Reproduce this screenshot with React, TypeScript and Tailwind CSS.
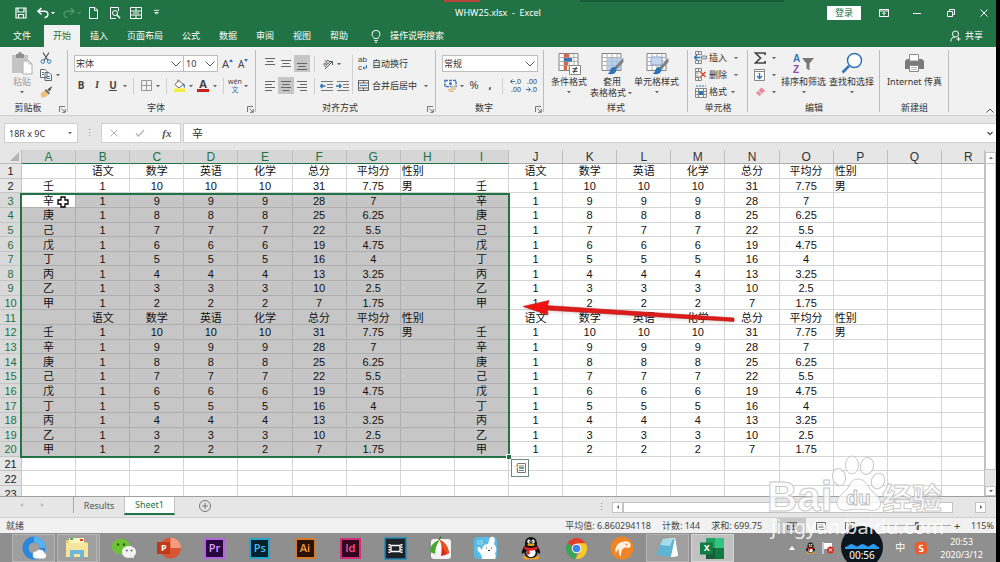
import type { ReactNode } from 'react'
import clsx from 'clsx'

const COLUMNS = 'ABCDEFGHIJKLMNOPQR'.split('')
const NAMES = ['壬', '辛', '庚', '己', '戊', '丁', '丙', '乙', '甲']
const SUBJECTS = ['语文', '数学', '英语', '化学', '总分', '平均分', '性别']

function buildRow(n: number): (string | number)[] {
  if (n > 20) return []
  if (n === 1 || n === 11) return ['', ...SUBJECTS, '', ...SUBJECTS]
  const i = n < 11 ? n - 2 : n - 12
  const v = 10 - i
  const total = 3 * v + 1
  const scores = [1, v, v, v, total, total / 4, i === 0 ? '男' : '']
  return [NAMES[i], ...scores, NAMES[i], ...scores]
}

const ROWS = Array.from({ length: 23 }, (_, i) => buildRow(i + 1))

/* ---------- small pieces ---------- */

function Caret({ className = 'text-[#666]' }: { className?: string }) {
  return (
    <svg viewBox="0 0 8 6" className={clsx('h-[6px] w-2 shrink-0', className)} fill="currentColor">
      <path d="M2 2h4L4 4.2z" />
    </svg>
  )
}

function Chevron({ className }: { className?: string }) {
  return (
    <svg viewBox="0 0 10 6" className={clsx('h-[6px] w-[10px]', className)} fill="none" stroke="#555" strokeWidth="1">
      <path d="M.5.5 5 5 9.5.5" />
    </svg>
  )
}

function Launcher() {
  return (
    <svg viewBox="0 0 7 7" className="h-[7px] w-[7px]" fill="none" stroke="#666" strokeWidth=".9">
      <path d="M.5 6V.5H6M2.5 2.5l3.5 3.5M6.3 3v3.3H3" />
    </svg>
  )
}

function Divider() {
  return <span className="mx-1 h-4 w-px shrink-0 bg-[#d0d0d0]" />
}

function Tool({ label, active, children }: { label: string; active?: boolean; children: ReactNode }) {
  return (
    <button
      aria-label={label}
      className={clsx('flex h-[17px] w-4 shrink-0 items-center justify-center', active && 'bg-[#c6c6c6]')}
    >
      {children}
    </button>
  )
}

function Group({ label, className, launcher, children }: { label: string; className: string; launcher?: boolean; children?: ReactNode }) {
  return (
    <section className={clsx('relative flex shrink-0 flex-col', className)}>
      <div className="flex-1">{children}</div>
      <div className="mb-px h-3 text-center leading-3">{label}</div>
      <span className="absolute top-[3px] right-0 h-[62px] w-px bg-[#bdbdbd]" />
      {launcher && (
        <button aria-label={`${label}设置`} className="absolute right-[2px] bottom-[2px]">
          <Launcher />
        </button>
      )}
    </section>
  )
}

function BigButton({ icon, lines, caret, inlineCaret, muted }: { icon: ReactNode; lines: string[]; caret?: boolean; inlineCaret?: boolean; muted?: boolean }) {
  return (
    <button className={clsx('flex flex-col items-center pt-1 leading-[11px] whitespace-nowrap', muted && 'text-[#a0a0a0]')}>
      <span className="mb-px flex h-6 items-center">{icon}</span>
      {lines.map((line, i) => (
        <span key={line} className="flex items-center">
          {line}
          {inlineCaret && i === lines.length - 1 && <Caret />}
        </span>
      ))}
      {caret && <span className="flex h-[10px] items-center"><Caret /></span>}
    </button>
  )
}

function Lines({ y, widths, align = 'center' }: { y: number; widths: number[]; align?: 'left' | 'center' | 'right' }) {
  return (
    <svg viewBox="0 0 12 16" className="h-4 w-3" stroke="#666" strokeWidth="1">
      {widths.map((w, i) => {
        const x = align === 'left' ? 1 : align === 'right' ? 11 - w : 6 - w / 2
        return <path key={i} d={`M${x} ${y + i * 3}h${w}`} />
      })}
    </svg>
  )
}

function Indent({ flip }: { flip?: boolean }) {
  return (
    <svg viewBox="0 0 14 12" className="h-3 w-[14px]" fill="none">
      <path d="M1 1.5h12M7 4.5h6M7 7.5h6M1 10.5h12" stroke="#777" />
      <path d={flip ? 'M0 6h5M3.2 4 5.2 6l-2 2' : 'M5.5 6h-5M2.5 4 .5 6l2 2'} stroke="#2e75b6" strokeWidth="1.3" />
    </svg>
  )
}

function CellsIcon({ kind }: { kind: 'insert' | 'delete' | 'format' }) {
  return (
    <svg viewBox="0 0 13 13" className="h-[13px] w-[13px]" fill="none">
      {kind !== 'format' && <path d="M1.5.5h6v3h-6zM1.5 9.5h6v3h-6zM4.500.5v3M4.500 9.500v3" stroke="#888" />}
      {kind === 'insert' && (
        <>
          <path d="M7.500 5h5v3h-5z" fill="#c5d6ec" stroke="#888" />
          <path d="M6.500 6.500h-6M3 4 .500 6.500 3 9" stroke="#2e75b6" strokeWidth="1.300" />
        </>
      )}
      {kind === 'delete' && (
        <>
          <path d="M1.500 3.500v6M4.500 5h-3M4.500 8h-3" stroke="#888" />
          <path d="m6.500 4 5 5M11.500 4l-5 5" stroke="#d9432f" strokeWidth="1.400" />
        </>
      )}
      {kind === 'format' && (
        <>
          <path d="M1.500 3.500h11v9h-11zM1.500 6.500h11M1.500 9.500h11M4.500 3.500v9M9.500 3.500v9" stroke="#888" />
          <path d="M5 6h4v4H5z" fill="#2e75b6" />
          <path d="M2 1h10" stroke="#2e75b6" strokeDasharray="2 1" />
        </>
      )}
    </svg>
  )
}

function TableIcon({ kind }: { kind: 'cond' | 'table' | 'cell' }) {
  return (
    <svg viewBox="0 0 24 24" className="h-6 w-6" fill="none">
      <path d="M2 2.500h19v17H2z" fill="#fff" stroke="#808080" />
      <path d="M2 6.500h19M2 10.500h19M2 14.500h19M7 2.500v17M12 2.500v17M17 2.500v17" stroke="#b0b0b0" />
      {kind === 'cond' && (
        <>
          <path d="M7 3h5v3.500H7zM7 11h4v3.500H7z" fill="#d9644a" />
          <path d="M7 7h8v3.500H7z" fill="#3b74b8" />
          <path d="M7 15h3v4H7z" fill="#d9644a" />
          <path d="M12.500 14.500h11v9h-11z" fill="#fff" stroke="#888" />
          <path d="M15.500 17.700h5M15.500 20.300h5M19.500 16l-3 6" stroke="#333" />
        </>
      )}
      {kind === 'table' && <path d="M7 7h14v12H7z" fill="#a9c5e6" fillOpacity=".8" />}
      {kind === 'cell' && <path d="M6 6h11v8H6z" fill="#c5d6ec" stroke="#8aa9cf" />}
      {kind !== 'cond' && (
        <>
          <path d="M23.500 7 14 16.500l2 2.500L23.500 11z" fill="#808080" />
          <path d="M14.500 16c-3-.5-4 2-4.500 4-.5 1.500-1.500 2-2.500 2.500 4 1.500 8.500.5 9-3.500z" fill="#2e75b6" />
        </>
      )}
    </svg>
  )
}

/* ---------- title, tabs ---------- */

function TitleBar() {
  return (
    <header className="relative grid h-[25px] grid-cols-3 items-center">
      <span className="absolute top-0 left-[444px] h-[2px] w-9 bg-[#b8443a]" />
      <span className="absolute top-0 left-[580px] h-[2px] w-[204px] bg-[#1a5c38]" />
      <div className="flex items-center pl-[15px]">
        <button aria-label="保存" className="w-[22px]">
          <svg viewBox="0 0 12 12" className="h-3 w-3" fill="none" stroke="#fff" strokeWidth="1.200">
            <path d="M1 1h10v10H1zM3 1v4h6V1M3.500 11V7.500h5V11" />
          </svg>
        </button>
        <button aria-label="撤消" className="flex w-[26px] items-center">
          <svg viewBox="0 0 12 12" className="h-3 w-3" fill="none" stroke="#fff" strokeWidth="1.500">
            <path d="M4.500 1 1 4.200l3.500 3.300M1 4.200h6.500c4.500 0 4.500 6.300 0 6.300" />
          </svg>
          <Caret className="text-white" />
        </button>
        <button aria-label="恢复" className="flex w-[25px] items-center">
          <svg viewBox="0 0 12 12" className="h-3 w-3" fill="none" stroke="#4f936b" strokeWidth="1.500">
            <path d="M7.500 1 11 4.200 7.500 7.500M11 4.200H4.500c-4.500 0-4.500 6.300 0 6.300" />
          </svg>
          <Caret className="text-[#4f936b]" />
        </button>
        <button aria-label="新建" className="w-[21px]">
          <svg viewBox="0 0 12 12" className="h-3 w-3" fill="none" stroke="#fff">
            <path d="M1.500.5H7L9.500 3v8.500h-8zM6.500.5v3h3" />
          </svg>
        </button>
        <button aria-label="打印预览" className="w-[21px]">
          <svg viewBox="0 0 12 12" className="h-3 w-3" fill="none" stroke="#fff">
            <path d="M9.500 4V.5h-8v11H7" />
            <circle cx="6" cy="6" r="2.500" />
            <path d="m8 8 3 3.300" strokeWidth="1.500" />
          </svg>
        </button>
        <button aria-label="表单" className="w-[21px]">
          <svg viewBox="0 0 12 12" className="h-3 w-3" fill="none" stroke="#fff">
            <path d="M.5.5h11v11H.5zM.5 4h11M.5 8h11M6 .5V4M6 8v3.500M3 6h6" />
          </svg>
        </button>
        <button aria-label="自定义快速访问工具栏" className="ml-[2px] w-3">
          <svg viewBox="0 0 8 8" className="h-[7px] w-[7px]" fill="none" stroke="#fff">
            <path d="M1 1.500h6M2 4h4L4 6z" />
          </svg>
        </button>
      </div>
      <h1 className="text-center leading-3 whitespace-pre text-white">WHW25.xlsx  -  Excel</h1>
      <div className="flex items-center justify-end pr-2 text-white">
        <button className="mr-[18px] h-[14px] w-[34px] bg-white leading-[14px] text-[#217346]">登录</button>
        <button aria-label="功能区显示选项" className="w-[34px]">
          <svg viewBox="0 0 10 8" className="h-2 w-[10px]" fill="none" stroke="currentColor">
            <path d="M.5.500h9v7h-9zM.5 2h9M5 6.500V3.500M3.500 4.800 5 3.300l1.500 1.500" />
          </svg>
        </button>
        <button aria-label="最小化" className="w-[34px]">
          <svg viewBox="0 0 8 8" className="h-2 w-2" stroke="currentColor"><path d="M0 4.500h8" /></svg>
        </button>
        <button aria-label="还原" className="w-[33px]">
          <svg viewBox="0 0 8 8" className="h-2 w-2" fill="none" stroke="currentColor">
            <path d="M.5 2.500h5v5h-5zM2.500 2.500v-2h5v5h-2" />
          </svg>
        </button>
        <button aria-label="关闭">
          <svg viewBox="0 0 8 8" className="h-2 w-2" stroke="currentColor"><path d="m.5.500 7 7M7.500.500l-7 7" /></svg>
        </button>
      </div>
    </header>
  )
}

const TABS = ['插入', '页面布局', '公式', '数据', '审阅', '视图', '帮助']

function TabBar() {
  return (
    <nav className="flex h-[22px] items-stretch text-white">
      <button className="w-11">文件</button>
      <button className="w-9 bg-[#f1f1f1] text-[#217346]">开始</button>
      <div className="ml-px flex gap-px">
        {TABS.map((tab) => (
          <button key={tab} className="px-[9px]">{tab}</button>
        ))}
      </div>
      <button className="ml-[14px] flex items-center gap-[9px]">
        <svg viewBox="0 0 10 13" className="h-[13px] w-[10px]" fill="none" stroke="#fff">
          <path d="M3 8.500C3 7 1 6.500 1 4.300a4 4 0 0 1 8 0C9 6.500 7 7 7 8.500zM3.300 10.500h3.400M4 12.300h2" />
        </svg>
        操作说明搜索
      </button>
      <button className="mr-[13px] ml-auto flex items-center gap-1">
        <svg viewBox="0 0 11 12" className="h-3 w-[11px]" fill="none" stroke="#fff">
          <circle cx="5.500" cy="4" r="3" />
          <path d="M.800 11.500C.800 8.500 2.500 7 5 7M6.500 9h4M8.500 7v4" />
        </svg>
        共享
      </button>
    </nav>
  )
}

/* ---------- ribbon ---------- */

function Ribbon() {
  return (
    <div className="relative flex h-[69px] border-b border-[#cfcfcf] bg-[#f1f1f1]">
      <Group label="剪贴板" className="w-[68px] pr-3" launcher>
        <div className="flex gap-[5px] pl-[11px]">
          <BigButton
            muted
            caret
            lines={['粘贴']}
            icon={
              <svg viewBox="0 0 22 24" className="h-6 w-[22px]">
                <path d="M1 4h16v18H1z" fill="#c4c4c4" />
                <path d="M5 3h2a2 2 0 0 1 4 0h2v4H5z" fill="#8f8f8f" />
                <path d="M12 10h6l3 3v10h-9z" fill="#fff" stroke="#b0b0b0" />
                <path d="M18 10v3h3" fill="none" stroke="#b0b0b0" />
              </svg>
            }
          />
          <div className="flex flex-col pt-[2px]">
            <Tool label="剪切">
              <svg viewBox="0 0 12 12" className="h-3 w-3" fill="none">
                <path d="m3 .5 5 8M9 .5l-5 8" stroke="#555" strokeWidth="1.200" />
                <circle cx="2.800" cy="9.500" r="1.800" stroke="#2e75b6" />
                <circle cx="9.200" cy="9.500" r="1.800" stroke="#2e75b6" />
              </svg>
            </Tool>
            <div className="flex items-center">
              <Tool label="复制">
                <svg viewBox="0 0 12 12" className="h-3 w-3" fill="#fff" stroke="#666">
                  <path d="M.5.5H5L7 2.500v6H.5zM5 3.500h4l2.500 2.500v5.500H5z" />
                  <path d="M2 3.500h2M2 5.500h2M6.500 7.500h3.500M6.500 9.500h3.500" stroke="#2e75b6" />
                </svg>
              </Tool>
              <Caret />
            </div>
            <Tool label="格式刷">
              <svg viewBox="0 0 12 12" className="h-3 w-3">
                <path d="M11.500 1 8 3.500 9.500 5z" fill="#555" stroke="#555" />
                <path d="m6 3 4 4-1.500 1.500-4-4z" fill="#666" />
                <path d="m4.500 4.500 4 4C7 11 4 11.500 1 11.500 1.800 10 .5 8 .5 7.500z" fill="#eec07b" />
              </svg>
            </Tool>
          </div>
        </div>
      </Group>

      <Group label="字体" className="w-[188px] pr-3" launcher>
        <div className="flex flex-col gap-[5px] pt-2 pl-[5px]">
          <div className="flex items-center">
            <label className="relative ml-px shrink-0">
              <select aria-label="字体" className="h-[17px] w-[110px] appearance-none border border-[#bebebe] bg-white pl-px leading-[15px]">
                <option>宋体</option>
              </select>
              <Chevron className="pointer-events-none absolute top-[6px] right-[3px]" />
            </label>
            <label className="relative -ml-px shrink-0">
              <select aria-label="字号" className="h-[17px] w-[35px] appearance-none border border-[#bebebe] bg-white pl-[2px] leading-[15px]">
                <option>10</option>
              </select>
              <Chevron className="pointer-events-none absolute top-[6px] right-[3px]" />
            </label>
            <button aria-label="增大字号" className="ml-1 flex w-4 shrink-0 text-[11px] leading-4 text-[#444]">
              A
              <svg viewBox="0 0 4 3" className="mt-[3px] h-[3px] w-1" fill="#2e75b6"><path d="M0 3 2 0l2 3z" /></svg>
            </button>
            <button aria-label="减小字号" className="flex w-4 shrink-0 text-[10px] leading-4 text-[#444]">
              A
              <svg viewBox="0 0 4 3" className="mt-[3px] h-[3px] w-1" fill="#2e75b6"><path d="m0 0 2 3 2-3z" /></svg>
            </button>
          </div>
          <div className="flex items-center text-[10px] text-[#444]">
            <Tool label="加粗"><b>B</b></Tool>
            <Tool label="倾斜"><i className="font-serif font-bold">I</i></Tool>
            <Tool label="下划线"><u className="font-bold">U</u></Tool>
            <Caret />
            <Divider />
            <Tool label="边框">
              <svg viewBox="0 0 11 11" className="h-[11px] w-[11px]" fill="none" stroke="#999">
                <path d="M.5.5h10v10H.5zM5.500.5v10M.5 5.500h10" />
              </svg>
            </Tool>
            <Caret />
            <Divider />
            <Tool label="填充颜色">
              <svg viewBox="0 0 13 13" className="h-[13px] w-[13px]">
                <path d="m2 5.500 4-4 4 4-4 3.500z" fill="#fff" stroke="#666" />
                <path d="M5 3V.5" stroke="#666" />
                <path d="M10 4c2 1 2.500 3 1.500 5C10.500 7.500 10 6 10 4z" fill="#2e75b6" />
                <path d="M1 9.500h11V13H1z" fill="#f5ee3c" />
              </svg>
            </Tool>
            <Caret />
            <Tool label="字体颜色">
              <span className="w-3 border-b-[3px] border-[#c8201c] text-[11px] leading-[10px] font-bold">A</span>
            </Tool>
            <Caret />
            <Divider />
            <button className="flex w-4 flex-col items-center text-[7px] leading-[8px]">
              <span>wén</span>
              <span className="text-[#2e75b6]">文</span>
            </button>
            <Caret />
          </div>
        </div>
      </Group>

      <Group label="对齐方式" className="w-[180px] pr-3" launcher>
        <div className="flex pt-2 pl-[6px]">
          <div className="flex w-[91px] shrink-0 flex-col gap-[5px] border-r border-[#d0d0d0]">
            <div className="flex items-center">
              <Tool label="顶端对齐"><Lines y={2.5} widths={[10, 7, 10]} /></Tool>
              <Tool label="垂直居中"><Lines y={4.5} widths={[10, 7, 10]} /></Tool>
              <Tool label="底端对齐" active><Lines y={7.5} widths={[10, 7, 10]} /></Tool>
              <Divider />
              <Tool label="方向">
                <svg viewBox="0 0 16 17" className="h-[17px] w-4 overflow-visible" fill="none" stroke="#555">
                  <path d="m6 14 7-7M13.500 10V6.500H10" />
                  <text x="3" y="11" transform="rotate(-45 6 8)" fill="#444" stroke="none" fontSize="7" fontFamily="Liberation Sans">ab</text>
                </svg>
              </Tool>
              <Caret />
            </div>
            <div className="flex items-center">
              <Tool label="左对齐"><Lines y={3.5} widths={[10, 7, 10, 7]} align="left" /></Tool>
              <Tool label="居中" active><Lines y={3.5} widths={[10, 7, 10, 7]} /></Tool>
              <Tool label="右对齐"><Lines y={3.5} widths={[10, 7, 10, 7]} align="right" /></Tool>
              <Divider />
              <Tool label="减少缩进量"><Indent /></Tool>
              <Tool label="增加缩进量"><Indent flip /></Tool>
            </div>
          </div>
          <div className="flex flex-col gap-[5px] pl-[5px] whitespace-nowrap">
            <button className="flex h-[17px] items-center gap-[3px]">
              <span className="flex w-[11px] flex-col items-start font-['Liberation_Sans',sans-serif] text-[8px] leading-[8px] text-[#444]">
                <span>ab</span>
                <span className="flex items-center">
                  c
                  <svg viewBox="0 0 5 5" className="h-[5px] w-[5px]" fill="none" stroke="#2e75b6"><path d="M4.500 0v3H1M2.500 1.500 1 3l1.500 1.500" /></svg>
                </span>
              </span>
              自动换行
            </button>
            <button className="flex h-[17px] items-center gap-[3px]">
              <svg viewBox="0 0 11 11" className="h-[11px] w-[11px]" fill="none" stroke="#666">
                <path d="M.5.5h10v10H.5zM.5 3h10M.5 8h10M5.500.5V3M5.500 8v2.500" />
                <path d="M2 5.500h7" stroke="#2e75b6" />
              </svg>
              合并后居中
              <span className="ml-[2px] flex"><Caret /></span>
            </button>
          </div>
        </div>
      </Group>

      <Group label="数字" className="w-[108px] pr-3" launcher>
        <div className="flex flex-col gap-[5px] pt-2 pl-[6px]">
          <label className="relative w-24">
            <select aria-label="数字格式" className="h-[17px] w-24 appearance-none border border-[#bebebe] bg-white pl-px leading-[15px]">
              <option>常规</option>
            </select>
            <Chevron className="pointer-events-none absolute top-[6px] right-[3px]" />
          </label>
          <div className="flex items-center text-[11px] text-[#444]">
            <Tool label="会计数字格式">
              <svg viewBox="0 0 13 13" className="h-[13px] w-[13px]">
                <path d="M1 1.500h11v6H1z" fill="#fff" stroke="#3b74b8" strokeWidth="1.500" strokeDasharray="3 1" />
                <circle cx="6.500" cy="4.500" r="1.500" fill="#3b74b8" />
                <path d="M7 7h5v1.500H7zM7 9.200h5v1.500H7zM4 10h4v1.500H4zM5 12h5v1H5z" fill="#e9b97c" />
              </svg>
            </Tool>
            <Caret />
            <Tool label="百分比样式">%</Tool>
            <Tool label="千位分隔样式"><b>,</b></Tool>
            <Divider />
            <button aria-label="增加小数位数" className="flex w-4 shrink-0 flex-col items-end pr-[2px] text-[7px] leading-[8px]">
              <span className="flex items-center">
                <svg viewBox="0 0 5 5" className="h-[5px] w-[5px]" fill="none" stroke="#2e75b6"><path d="M5 2.500H.5M2.500.5l-2 2 2 2" /></svg>
                .0
              </span>
              <span>.00</span>
            </button>
            <button aria-label="减少小数位数" className="flex w-4 shrink-0 flex-col items-end pr-[2px] text-[7px] leading-[8px]">
              <span>.00</span>
              <span className="flex items-center">
                <svg viewBox="0 0 5 5" className="h-[5px] w-[5px]" fill="none" stroke="#2e75b6"><path d="M0 2.500h4.500M2.500.5l2 2-2 2" /></svg>
                .0
              </span>
            </button>
          </div>
        </div>
      </Group>

      <Group label="样式" className="w-36">
        <div className="flex items-start pl-[7px]">
          <BigButton icon={<TableIcon kind="cond" />} lines={['条件格式']} caret />
          <span className="ml-[3px]"><BigButton icon={<TableIcon kind="table" />} lines={['套用', '表格格式']} inlineCaret /></span>
          <BigButton icon={<TableIcon kind="cell" />} lines={['单元格样式']} caret />
        </div>
      </Group>

      <Group label="单元格" className="w-[60px]">
        <div className="flex flex-col pt-[2px] pl-[6px]">
          <button className="flex h-[17px] items-center gap-[2px]"><CellsIcon kind="insert" />插入<span className="ml-[3px] flex"><Caret /></span></button>
          <button className="flex h-[17px] items-center gap-[2px]"><CellsIcon kind="delete" />删除<span className="ml-[3px] flex"><Caret /></span></button>
          <button className="flex h-[17px] items-center gap-[2px]"><CellsIcon kind="format" />格式<Caret /></button>
        </div>
      </Group>

      <Group label="编辑" className="w-[132px]">
        <div className="flex items-start pl-1">
          <div className="flex w-[29px] flex-col pt-[2px]">
            <div className="flex items-center gap-[2px]">
              <Tool label="自动求和">
                <svg viewBox="0 0 12 12" className="h-3 w-3" fill="none" stroke="#444" strokeWidth="1.700">
                  <path d="M11 3V1H1.500L6.500 6l-5 5H11V9" />
                </svg>
              </Tool>
              <Caret />
            </div>
            <div className="flex items-center gap-[2px]">
              <Tool label="填充">
                <svg viewBox="0 0 12 12" className="h-3 w-3" fill="#fff" stroke="#888">
                  <path d="M.5.5h10v11H.5zM.5 2.500h10" />
                  <path d="M5.500 4v5.500M3 7l2.500 2.500L8 7" fill="none" stroke="#2e75b6" strokeWidth="1.400" />
                </svg>
              </Tool>
              <Caret />
            </div>
            <div className="flex items-center gap-[2px]">
              <Tool label="清除">
                <svg viewBox="0 0 12 12" className="h-[11px] w-[11px]">
                  <path d="M7 1.500 11 5 5 11 1 7.500z" fill="#e58a9d" />
                  <path d="m3.500 5 4 3.700" stroke="#fff" />
                </svg>
              </Tool>
              <Caret />
            </div>
          </div>
          <BigButton
            caret
            lines={['排序和筛选']}
            icon={
              <svg viewBox="0 0 24 24" className="h-6 w-6" fontFamily="Liberation Sans">
                <text x="1" y="11" fill="#2e75b6" fontSize="10" fontWeight="700">A</text>
                <text x="1" y="22" fill="#8f4bab" fontSize="10" fontWeight="700">Z</text>
                <path d="M10 7h12l-4.500 5.500v7l-3-2v-5z" fill="#777" />
              </svg>
            }
          />
          <span className="ml-[3px]">
            <BigButton
              caret
              lines={['查找和选择']}
              icon={
                <svg viewBox="0 0 24 24" className="h-6 w-6" fill="none" stroke="#2e75b6">
                  <circle cx="14.500" cy="9.500" r="7" fill="#fff" strokeWidth="1.500" />
                  <path d="m9 15-6.500 6.500" strokeWidth="2.500" />
                </svg>
              }
            />
          </span>
        </div>
      </Group>

      <Group label="新建组" className="w-[69px]">
        <div className="flex justify-center">
          <BigButton
            lines={['Internet 传真']}
            icon={
              <svg viewBox="0 0 24 24" className="h-6 w-6">
                <path d="M5 8h15l2 2v8H3v-8z" fill="#7a7a7a" />
                <path d="M7.500 3.500h9V10h-9zM7.500 14.500h9v6h-9z" fill="#fff" stroke="#888" />
                <path d="M9 16.500h6M9 18.500h6" stroke="#bbb" />
              </svg>
            }
          />
        </div>
      </Group>

      <button aria-label="折叠功能区" className="absolute right-[2px] bottom-[2px]">
        <svg viewBox="0 0 8 5" className="h-[5px] w-2" fill="none" stroke="#555"><path d="M.5 4.500 4 1l3.500 3.500" /></svg>
      </button>
    </div>
  )
}

function FormulaBar() {
  return (
    <div className="flex h-[34px] items-center bg-[#e6e6e6] pl-1">
      <label className="relative">
        <input aria-label="名称框" defaultValue="18R x 9C" className="h-5 w-[74px] border border-[#cfcfcf] bg-white pl-1" />
        <span className="absolute top-[7px] right-1 flex"><Caret /></span>
      </label>
      <span className="w-[23px] text-center text-[#999]">⋮</span>
      <div className="flex h-5 w-20 items-center justify-around border border-[#cfcfcf] bg-white text-[#b5b5b5]">
        <button aria-label="取消">
          <svg viewBox="0 0 8 8" className="h-2 w-2" stroke="currentColor"><path d="m.5.500 7 7M7.500.500l-7 7" /></svg>
        </button>
        <button aria-label="输入">
          <svg viewBox="0 0 10 8" className="h-2 w-[10px]" fill="none" stroke="currentColor" strokeWidth="1.300"><path d="m1 4.500 2.500 2.500L9 1" /></svg>
        </button>
        <button className="font-['Liberation_Serif',serif] text-[11px] leading-3 font-bold text-[#555] italic">fx</button>
      </div>
      <label className="relative ml-[2px] flex-1">
        <input aria-label="编辑栏" defaultValue="辛" className="h-5 w-full border border-r-0 border-[#cfcfcf] bg-white pl-2 text-[11px]" />
        <svg viewBox="0 0 6 5" className="absolute top-2 right-[3px] h-[5px] w-[6px]" fill="none" stroke="#555" strokeWidth="1.300"><path d="M.5 1 3 3.500 5.500 1" /></svg>
      </label>
    </div>
  )
}

/* ---------- sheet ---------- */

function Sheet() {
  return (
    <div className="flex min-h-0 flex-1 bg-[#e6e6e6]">
      <div className="relative min-w-0 flex-1 overflow-hidden border-r border-[#c0c0c0]">
        <table className="h-[351px] w-[996px] table-fixed border-separate border-spacing-0 font-['Liberation_Sans','Noto_Sans_CJK_SC',sans-serif] text-[11px] leading-3 text-[#111]">
          <colgroup>
            <col className="w-[22px]" />
            {COLUMNS.map((c) => <col key={c} />)}
          </colgroup>
          <thead>
            <tr className="h-[14px] text-[12px]">
              <th className="border-r border-b border-[#bdbdbd] p-0">
                <svg viewBox="0 0 9 9" className="ml-[10px] h-[9px] w-[9px]" fill="#b5b5b5"><path d="M9 0v9H0z" /></svg>
              </th>
              {COLUMNS.map((c, i) => (
                <th
                  key={c}
                  className={clsx(
                    'border-r border-b border-r-[#bdbdbd] p-0 pt-px font-normal',
                    i < 9 ? 'border-b-[#217346] bg-[#d6d6d6] text-[#217346]' : 'border-b-[#a9a9a9] text-[#333]',
                  )}
                >
                  {c}
                </th>
              ))}
            </tr>
          </thead>
          <tbody>
            {ROWS.map((row, r) => {
              const picked = r >= 2 && r < 20
              return (
                <tr key={r}>
                  <th
                    className={clsx(
                      'border-r border-b border-[#c4c4c4] p-0 pt-px font-normal',
                      picked ? 'bg-[#d9d9d9] text-[#217346]' : 'text-[#222]',
                    )}
                  >
                    {r + 1}
                  </th>
                  {COLUMNS.map((c, i) => (
                    <td
                      key={c}
                      className={clsx(
                        'overflow-hidden border-r border-b p-0 pt-px',
                        i === 7 || i === 15 ? 'pl-px text-left' : 'text-center',
                        picked && i < 9 ? 'border-[#aeaeae]' : 'border-[#d4d4d4]',
                        picked && i < 9 && !(r === 2 && i === 0) ? 'bg-[#c6c6c6]' : 'bg-white',
                      )}
                    >
                      {row[i]}
                    </td>
                  ))}
                </tr>
              )
            })}
          </tbody>
        </table>

        {/* selection frame with fill handle */}
        <div className="pointer-events-none absolute top-[43px] left-5 h-[265px] w-[490px] border-2 border-[#217346]">
          <span className="absolute -right-[3px] -bottom-[3px] h-[5px] w-[5px] border-t border-l border-white bg-[#217346]" />
        </div>
        <svg viewBox="0 0 12 12" className="absolute top-[46px] left-[57px] h-3 w-3" fill="#fff" stroke="#000" strokeWidth="1.300">
          <path d="M4 1h4v3h3v4H8v3H4V8H1V4h3z" />
        </svg>
        <button aria-label="快速分析" className="absolute top-[309px] left-[511px] flex h-[18px] w-[18px] items-center justify-center border border-[#6b8a78] bg-white">
          <svg viewBox="0 0 12 12" className="h-3 w-3" fill="none" stroke="#777">
            <path d="M3.500 1.500h8v9h-8zM5 4h5M5 8.500h5" />
            <path d="M5 6h5" stroke="#2e8a7a" strokeWidth="1.500" />
            <path d="M4 0 1 5h2l-2 5 4-6H3z" fill="#eec07b" stroke="none" />
          </svg>
        </button>
        <svg viewBox="0 0 216 28" className="absolute top-[149px] left-[522px] h-7 w-[216px] drop-shadow-sm">
          <path d="M24 6.500 212 19v3.500L24 11z" fill="#dd1c1a" stroke="#b81412" strokeWidth=".6" />
          <path d="M1 7.500 27 1.500l-2 6.500 1 8z" fill="#f01210" stroke="#c21513" strokeWidth=".6" />
        </svg>
      </div>
      <div className="flex w-[11px] flex-col justify-between bg-[#e6e6e6] pt-[2px]">
        <button aria-label="向上" className="flex h-3 items-center justify-center border border-[#c4c4c4] bg-white">
          <Caret className="rotate-180 text-[#666]" />
        </button>
        <div className="w-full flex-1 border-x border-b border-[#c4c4c4] bg-white" />
        <div className="h-4" />
        <button aria-label="向下" className="flex h-[10px] items-center justify-center border border-[#c4c4c4] bg-white">
          <Caret />
        </button>
      </div>
    </div>
  )
}

function SheetTabs() {
  return (
    <div className="flex h-[21px] shrink-0 border-t border-[#a0a0a0] bg-[#e6e6e6] text-[#555]">
      <div className="flex h-4 w-[74px] items-center justify-center gap-3 border-r border-[#a8a8a8] pr-[10px] text-[#b5b5b5]">
        <button aria-label="上一个"><svg viewBox="0 0 8 8" className="h-2 w-2" fill="currentColor"><path d="M5 2v4L2.500 4z" /></svg></button>
        <button aria-label="下一个"><svg viewBox="0 0 8 8" className="h-2 w-2" fill="currentColor"><path d="M3 2v4l2.500-2z" /></svg></button>
      </div>
      <button className="h-[18px] w-[50px]">Results</button>
      <button className="h-[18px] w-[51px] border-x border-b-2 border-x-[#c4c4c4] border-b-[#217346] bg-white text-[#217346]">Sheet1</button>
      <button aria-label="新工作表" className="ml-6 flex h-[18px] items-center">
        <svg viewBox="0 0 12 12" className="h-3 w-3" fill="none" stroke="#777">
          <circle cx="6" cy="6" r="5.500" />
          <path d="M6 3v6M3 6h6" />
        </svg>
      </button>
      <div className="ml-auto flex h-5 w-[399px] items-center pr-[10px]">
        <span className="text-[#888]">⋮</span>
        <button aria-label="向左" className="ml-[6px] flex h-[11px] w-[11px] items-center justify-center border border-[#c4c4c4] bg-white">
          <Caret className="rotate-90 text-[#666]" />
        </button>
        <div className="mr-[22px] h-[11px] flex-1 border border-[#c4c4c4] bg-white" />
        <button aria-label="向右" className="flex h-[11px] w-[11px] items-center justify-center border border-[#c4c4c4] bg-white">
          <Caret className="-rotate-90 text-[#666]" />
        </button>
      </div>
    </div>
  )
}

function StatusBar() {
  return (
    <div className="flex h-4 shrink-0 items-center border-t border-[#d0d0d0] bg-[#f1f1f1] pr-[2px] pl-[6px] text-[#444]">
      <span>就绪</span>
      <div className="ml-auto flex gap-[11px]">
        <span>平均值: 6.860294118</span>
        <span>计数: 144</span>
        <span>求和: 699.75</span>
      </div>
      <div className="ml-[15px] flex items-center">
        <button aria-label="普通" className="flex h-[15px] w-[29px] items-center justify-center bg-[#c6c6c6]">
          <svg viewBox="0 0 10 8" className="h-2 w-[10px]" fill="none" stroke="#666"><path d="M.5.500h9v7h-9zM.5 4h9M3.500.5v7M6.500.5v7" /></svg>
        </button>
        <button aria-label="页面布局" className="flex w-[29px] justify-center">
          <svg viewBox="0 0 10 8" className="h-2 w-[10px]" fill="none" stroke="#666"><path d="M.5.500h9v7h-9zM2.500 2.500h5M2.500 5h5" /></svg>
        </button>
        <button aria-label="分页预览" className="flex w-[30px] justify-center">
          <svg viewBox="0 0 10 8" className="h-2 w-[10px]" fill="none" stroke="#666"><path d="M.5 7.500V.5h3.500v7M6 7.500V.5h3.500v7" /></svg>
        </button>
      </div>
      <div className="relative ml-4 flex w-[70px] items-center">
        <span className="h-px w-full bg-[#a8a8a8]" />
        <input
          type="range"
          aria-label="缩放"
          defaultValue={52}
          className="absolute inset-0 m-auto h-2 w-full appearance-none bg-transparent [&::-webkit-slider-thumb]:h-2 [&::-webkit-slider-thumb]:w-1 [&::-webkit-slider-thumb]:appearance-none [&::-webkit-slider-thumb]:bg-[#666]"
        />
      </div>
      <button className="w-3 text-[11px] leading-3">+</button>
      <span className="ml-2">115%</span>
    </div>
  )
}

/* ---------- taskbar ---------- */

function Adobe({ text, className }: { text: string; className: string }) {
  return (
    <span className={clsx("flex h-[21px] w-[21px] items-center justify-center border-2 font-['Open_Sans',sans-serif] text-[11px] font-semibold", className)}>
      {text}
    </span>
  )
}

function Penguin({ className }: { className: string }) {
  return (
    <svg viewBox="0 0 24 26" className={className}>
      <ellipse cx="8" cy="23.500" rx="5" ry="2" fill="#f0a020" />
      <ellipse cx="16" cy="23.500" rx="5" ry="2" fill="#f0a020" />
      <path d="M12 1c5 0 7 4 6.500 9 2 3 4 6 3.500 9-1 1-2-1-3-1 0 4-3 6-7 6s-7-2-7-6c-1 0-2 2-3 1-.500-3 1.500-6 3.500-9C5 5 7 1 12 1z" fill="#111" />
      <ellipse cx="12" cy="18" rx="5" ry="5" fill="#fff" />
      <ellipse cx="9.700" cy="6" rx="1.700" ry="2.300" fill="#fff" />
      <ellipse cx="14.300" cy="6" rx="1.700" ry="2.300" fill="#fff" />
      <circle cx="10.200" cy="6.300" r=".8" />
      <circle cx="13.800" cy="6.300" r=".8" />
      <ellipse cx="12" cy="9.500" rx="4" ry="1.300" fill="#f0a020" />
      <path d="M5 11c4 2.500 10 2.500 14 0l.5 3c-3 1.500-6 2-9 1.800V20H7.500v-4.800L4.500 14z" fill="#e02020" />
    </svg>
  )
}

const APPS: { name: string; frame?: string; icon: ReactNode }[] = [
  {
    name: 'QQ浏览器',
    frame: 'border border-[#b5b5b5] bg-white/15',
    icon: (
      <svg viewBox="0 0 24 24" className="h-6 w-6">
        <circle cx="12" cy="12" r="8.500" fill="none" stroke="#2b87dc" strokeWidth="6" />
        <path d="M12 3.500a8.500 8.500 0 0 1 8.500 8.500" fill="none" stroke="#55b4f0" strokeWidth="6" />
        <path d="M14 22.500a3.500 3.500 0 0 1 .500-7 4.500 4.500 0 0 1 8 1.500 3 3 0 0 1-.500 5.500z" fill="#fff" />
      </svg>
    ),
  },
  {
    name: '文件资源管理器',
    frame: 'border border-r-4 border-double border-[#b5b5b5] bg-white/15',
    icon: (
      <svg viewBox="0 0 24 24" className="h-6 w-6">
        <path d="M1 4h8l2 2h11v15H1z" fill="#e8cf74" />
        <path d="M4 2h15v6H4z" fill="#fff3c0" />
        <path d="M5 2h3v2H5z" fill="#4caf50" />
        <path d="M15 3h3v2h-3z" fill="#d9432f" />
        <path d="M1 7h22v14H1z" fill="#f6e59a" />
        <path d="M5 22v-8h14v8h-4v-4H9v4z" fill="#6db9dd" />
      </svg>
    ),
  },
  {
    name: '微信',
    icon: (
      <svg viewBox="0 0 26 22" className="h-[22px] w-[26px]">
        <path d="M10 2c5 0 9 3 9 7.500S15 17 10 17c-1 0-2 0-3-.5L4 18l.500-2.500C2 14 1 12 1 9.500 1 5 5 2 10 2z" fill="#6cc433" />
        <circle cx="7" cy="7.500" r="1.200" fill="#245c12" />
        <circle cx="13" cy="7.500" r="1.200" fill="#245c12" />
        <path d="M18 9c4 0 7 2.500 7 6 0 2-1 3.500-2.500 4.500L23 21.500 20.500 20.500c-5 1.500-9.500-1-9.500-5.500 0-3.500 3-6 7-6z" fill="#f2f2f2" />
        <circle cx="15.800" cy="13.500" r="1" fill="#666" />
        <circle cx="20.500" cy="13.500" r="1" fill="#666" />
      </svg>
    ),
  },
  {
    name: 'PowerPoint',
    icon: (
      <span className="relative flex h-[22px] w-6 items-center">
        <svg viewBox="0 0 24 22" className="absolute inset-0 h-full w-full">
          <circle cx="13.500" cy="11" r="10.500" fill="#d65532" />
          <path d="M13.500.5A10.500 10.500 0 0 1 24 11H13.500z" fill="#f59b80" />
          <path d="M0 5h13v12H0z" fill="#bf3a1b" />
        </svg>
        <b className="relative w-[13px] text-center text-[9px] text-white">P</b>
      </span>
    ),
  },
  { name: 'Premiere', icon: <Adobe text="Pr" className="border-[#b266dd] bg-[#2a0640] text-[#d9a0ff]" /> },
  { name: 'Photoshop', icon: <Adobe text="Ps" className="border-[#27a5cf] bg-[#06202c] text-[#3cc5f0]" /> },
  { name: 'Illustrator', icon: <Adobe text="Ai" className="border-[#d9792b] bg-[#2b1206] text-[#f59a3c]" /> },
  { name: 'InDesign', icon: <Adobe text="Id" className="border-[#cf2f78] bg-[#33041c] text-[#f0559a]" /> },
  {
    name: '视频编辑',
    icon: (
      <svg viewBox="0 0 23 23" className="h-[23px] w-[23px]" fill="none">
        <path d="M1 1h21v21H1z" fill="#1d2228" stroke="#2487b5" strokeWidth="1.500" />
        <path d="M7 8.500h9v6H7z" stroke="#fff" strokeWidth="1.300" />
        <path d="M5.500 7v9M17.500 7v9" stroke="#fff" strokeWidth="2" strokeDasharray="1.500 1" />
      </svg>
    ),
  },
  {
    name: '格式转换',
    icon: (
      <svg viewBox="0 0 22 24" className="h-6 w-[22px]">
        <rect x="1" y="3" width="20" height="20" rx="3" fill="#f3f3f3" />
        <path d="M10 4C4 5 0 10 0 16l5 2C5 12 7 8 10 4z" fill="#4aa832" />
        <path d="M10 4C7 8 6 13 8 17l3-3c0-4 0-7-1-10z" fill="#fff" />
        <path d="M10 4c2 4 2 10 1 16 3-1 5-1 8-3C18 11 15 6 10 4z" fill="#d9281c" />
        <path d="M10 4c1 5 3 10 7 14l2-1C18 11 15 6 10 4z" fill="#e8541e" />
        <path d="M9 4 11 .5" stroke="#3a7a28" strokeWidth="1.500" />
      </svg>
    ),
  },
  {
    name: '招手助手',
    icon: (
      <svg viewBox="0 0 24 24" className="h-6 w-6">
        <rect x="0" y="1" width="23" height="22" rx="4" fill="#58bce6" />
        <path d="M17 1c3-1 5 1 3 7 3 3 3 7 1 9 1 2 1 5 0 6H8c0-3-1-5-3-7-2-2-2-5 0-5s1 2 3 3c0-3 2-6 6-6 1-3 1-6 3-7z" fill="#fff" />
        <path d="M4 5h4v3H4z" fill="none" stroke="#a9def3" />
        <path d="M12 12h1M17 12h1M14 14.500h2" stroke="#333" />
      </svg>
    ),
  },
  { name: 'QQ', icon: <Penguin className="h-6 w-[22px]" /> },
  {
    name: 'Chrome',
    icon: (
      <svg viewBox="0 0 24 24" className="h-[23px] w-[23px]">
        <path d="M12 12 2.500 6.500a11 11 0 0 1 19 0z" fill="#e2402f" />
        <path d="M2.500 6.500 12 12l-1 11A11 11 0 0 1 2.500 6.500z" fill="#3aa554" />
        <path d="M21.500 6.500A11 11 0 0 1 11 23l5-9-4-7.500z" fill="#fbc926" />
        <circle cx="12" cy="12" r="5" fill="#fff" />
        <circle cx="12" cy="12" r="4" fill="#4285e8" />
      </svg>
    ),
  },
  {
    name: 'UC浏览器',
    icon: (
      <svg viewBox="0 0 24 24" className="h-6 w-6">
        <circle cx="12" cy="12" r="11.500" fill="#ee8426" />
        <path d="M20 7c1 2 1 4-1 5-2 0-3-1-5 0-3 2-3 6-3 9-2-2-3-5-2-8-2 1-3 3-3 5-2-5 1-11 6-12 3-1 6-1 8 1z" fill="#fdf0e0" />
        <circle cx="16.500" cy="8.500" r=".9" fill="#ee8426" />
      </svg>
    ),
  },
  {
    name: '记事本',
    frame: 'border border-[#b5b5b5] bg-white/15',
    icon: (
      <svg viewBox="0 0 24 24" className="h-6 w-6">
        <path d="M8 3 20 2l3 18-7 1z" fill="#f1f1f1" />
        <path d="M8 3h12l-4 18-15-2z" fill="#5fb4cf" />
        <path d="m8 3 10 0-3 7L5 9z" fill="#a4dceb" />
        <path d="m20 2 3 18-7 1z" fill="#fff" />
      </svg>
    ),
  },
  {
    name: 'Excel',
    frame: 'border border-[#d5d5d5] bg-white/45',
    icon: (
      <span className="relative flex h-[21px] w-6 items-center">
        <svg viewBox="0 0 24 21" className="absolute inset-0 h-full w-full">
          <path d="M6 0h9v10H6z" fill="#21a366" />
          <path d="M15 0h9v10h-9z" fill="#33c481" />
          <path d="M6 10h9v11H6z" fill="#185c37" />
          <path d="M15 10h9v11h-9z" fill="#107c41" />
          <path d="M0 4.500h13v12H0z" fill="#107c41" />
        </svg>
        <b className="relative w-[13px] text-center text-[9px] text-white">X</b>
      </span>
    ),
  },
]

function Taskbar() {
  return (
    <footer className="relative flex h-[29px] shrink-0 bg-[#8f8f8f] text-white">
      <div className="ml-3 grid w-[724px] grid-cols-16">
        {APPS.map((app) => (
          <button key={app.name} aria-label={app.name} className="flex items-center pt-px">
            <span className={clsx('flex h-7 w-[43px] items-center justify-center', app.frame)}>{app.icon}</span>
          </button>
        ))}
      </div>
      <div className="ml-auto flex items-center">
        <button aria-label="显示隐藏的图标" className="w-4">
          <svg viewBox="0 0 6 4" className="h-1 w-[6px]" fill="#fff"><path d="M3 0 6 4H0z" /></svg>
        </button>
        <Penguin className="h-3 w-[11px]" />
        <svg viewBox="0 0 12 12" className="ml-[6px] h-3 w-3">
          <path d="M1 0v12" stroke="#fff" />
          <path d="M2 1h8v6H2z" fill="#fff" />
          <circle cx="8.500" cy="8" r="3.500" fill="#d9281c" />
          <path d="m7 6.500 3 3M10 6.500l-3 3" stroke="#fff" />
        </svg>
        <span className="ml-[61px] text-[10px]">中</span>
        <span className="ml-[10px] flex h-3 w-3 -rotate-6 items-center justify-center rounded-[3px] bg-[#ee5a24] text-[10px] font-bold">S</span>
        <div className="mx-[13px] text-center leading-[13px]">
          <div>20:53</div>
          <div>2020/3/12</div>
        </div>
      </div>
      {/* recorder bubble */}
      <div className="absolute right-[113px] -bottom-[6px] flex h-[42px] w-[42px] flex-col items-center rounded-full bg-[#0d151d] pt-[17px]">
        <svg viewBox="0 0 34 6" className="h-[6px] w-[34px]" fill="#2f9bf0">
          <path d="M0 4c3 0 4-3 6.500-3S10 3.500 12 3.500 15 1 17.500 1 21 3.500 23 3.500 26 1 28.500 1 31 4 34 4v2H0z" />
        </svg>
        <span className="text-[10px] leading-3">00:56</span>
      </div>
    </footer>
  )
}

function Watermark() {
  return (
    <svg viewBox="0 0 190 90" className="pointer-events-none absolute right-[46px] bottom-[18px] h-[90px] w-[190px]" fill="#fff" fillOpacity=".75" stroke="#c9c9c9" strokeWidth="1">
      <text x="7" y="57" fontSize="42" fontWeight="700" fontFamily="Liberation Sans">Bai</text>
      <ellipse cx="94" cy="11" rx="6.500" ry="9" transform="translate(-2 0)" />
      <ellipse cx="107" cy="12" rx="6.500" ry="8.500" transform="rotate(12 107 12)" />
      <ellipse cx="79" cy="23" rx="6.500" ry="8.500" transform="rotate(-15 79 23)" />
      <ellipse cx="118" cy="27" rx="6.500" ry="8" transform="rotate(25 118 27)" />
      <path d="M98 25c8 0 9 8 15 13s9 9 7 14-8 5-12 4-14-1-19 0-11 0-12-5 2-9 8-14 5-12 13-12z" />
      <text x="86" y="51" fontSize="20" fontWeight="700" fontFamily="Liberation Sans" stroke="#bdbdbd">du</text>
      <text x="122" y="55" fontSize="30" fontWeight="700" fontFamily="Noto Sans CJK SC">经验</text>
      <text x="11" y="80" fontSize="20" fillOpacity=".85" stroke="none" fontFamily="Noto Sans">jingyan.baidu.com</text>
    </svg>
  )
}

export default function App() {
  return (
    <div className="h-screen min-h-[420px] bg-black pr-1 font-['Noto_Sans','Noto_Sans_CJK_SC',sans-serif] text-[9px] text-[#333]">
      <main className="relative flex h-full flex-col overflow-hidden bg-[#217346]">
        <TitleBar />
        <TabBar />
        <Ribbon />
        <FormulaBar />
        <Sheet />
        <SheetTabs />
        <StatusBar />
        <Taskbar />
        <Watermark />
      </main>
    </div>
  )
}
